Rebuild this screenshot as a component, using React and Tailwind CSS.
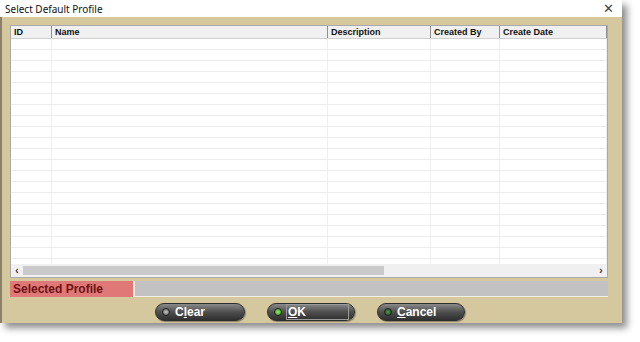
const columns = [
    { label: 'ID', w: 'w-[41px]' },
    { label: 'Name', w: 'w-[276px]' },
    { label: 'Description', w: 'w-[103px]' },
    { label: 'Created By', w: 'w-[69px]' },
    { label: 'Create Date', w: 'w-[107px]' },
];

const rows = Array.from({ length: 21 });

const Led = ({ color }) => (
    <span className={`w-[8px] h-[8px] rounded-full border border-[#222] ${color} shrink-0`} />
);

const PillButton = ({ width, led, children, focused }) => (
    <button
        className={`${width} h-[18px] rounded-full border border-[#2e2e2e] bg-gradient-to-b from-[#8a8a8a] via-[#4f4f4f] to-[#2f2f2f] shadow-[1px_1px_1px_rgba(0,0,0,0.35)] flex items-center pl-[6px] gap-[4px]`}
    >
        <Led color={led} />
        <span
            className={`text-white font-bold text-[12px] leading-[14px] px-[1px] ${focused ? 'border border-[#9a9a9a] w-[63px] text-left' : ''}`}
        >
            {children}
        </span>
    </button>
);

export default function App() {
    return (
        <div className="w-[640px] h-[342px] bg-white relative overflow-hidden font-['Liberation_Sans',Arial,sans-serif]">
            <div className="w-[622px] h-[323px] flex flex-col shadow-[5px_5px_7px_rgba(0,0,0,0.45)]">
                {/* title bar */}
                <div className="h-[17px] bg-white flex items-center justify-between pl-[5px] pr-[8px]">
                    <span className="text-[10px] text-[#111] font-['Noto_Sans',sans-serif] leading-none">Select Default Profile</span>
                    <span className="text-[13px] text-[#444] leading-none">✕</span>
                </div>

                {/* body */}
                <div className="flex-1 bg-[#d5c89f] border-l-[2px] border-[#8c8168] pl-[8px] pr-[14px] pt-[8px] flex flex-col">
                    {/* table */}
                    <div className="h-[253px] bg-white border border-[#a9a9a9] flex flex-col overflow-hidden">
                        <div className="flex h-[13px] shrink-0 bg-[#f0f0f0] border-b border-[#d0d0d0]">
                            {columns.map((c) => (
                                <div
                                    key={c.label}
                                    className={`${c.w} h-full border-r border-[#8f8f8f] pl-[3px] text-[9px] font-bold text-[#111] leading-[13px]`}
                                >
                                    {c.label}
                                </div>
                            ))}
                        </div>
                        <div className="flex-1 overflow-hidden">
                            {rows.map((_, i) => (
                                <div key={i} className="flex h-[11px] border-b border-[#ececec]">
                                    {columns.map((c) => (
                                        <div key={c.label} className={`${c.w} h-full border-r border-[#efefef]`} />
                                    ))}
                                </div>
                            ))}
                        </div>
                        <div className="h-[13px] shrink-0 bg-[#f0f0f0] flex items-center">
                            <span className="w-[12px] text-center text-[10px] font-bold text-[#333] leading-none">‹</span>
                            <div className="w-[361px] h-[9px] bg-[#c9c9c9]" />
                            <div className="flex-1" />
                            <span className="w-[12px] text-center text-[10px] font-bold text-[#333] leading-none">›</span>
                        </div>
                    </div>

                    {/* selected profile */}
                    <div className="mt-[3px] h-[16px] flex">
                        <div className="w-[125px] h-full bg-[#e07878] border-r-[2px] border-[#f4f0e6] flex items-center pl-[3px]">
                            <span className="text-[12px] font-bold text-[#6e1212] leading-none">Selected Profile</span>
                        </div>
                        <div className="flex-1 h-full bg-[#c2c2c2] border-b border-[#f4f0e6]" />
                    </div>

                    {/* buttons */}
                    <div className="mt-[6px] flex pl-[145px] gap-[22px]">
                        <PillButton width="w-[90px]" led="bg-[radial-gradient(circle,#c8c8c8,#555)]">
                            C<span className="underline">l</span>ear
                        </PillButton>
                        <PillButton width="w-[88px]" led="bg-[radial-gradient(circle,#8ef05a,#2f9a1a)]" focused>
                            <span className="underline">O</span>K
                        </PillButton>
                        <PillButton width="w-[88px]" led="bg-[radial-gradient(circle,#4fa14a,#163d16)]">
                            <span className="underline">C</span>ancel
                        </PillButton>
                    </div>
                </div>
            </div>
        </div>
    );
}
